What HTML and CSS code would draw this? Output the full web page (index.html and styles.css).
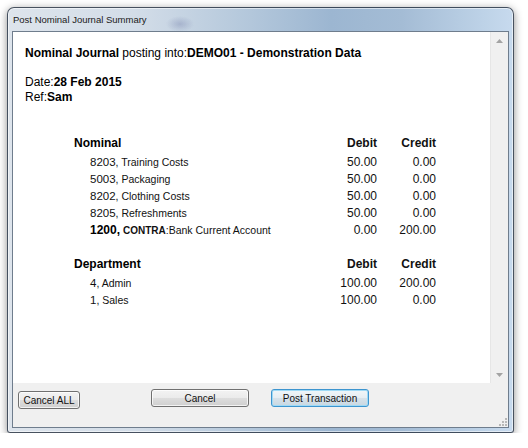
FILE: index.html
```html
<!DOCTYPE html>
<html>
<head>
<meta charset="utf-8">
<title>Post Nominal Journal Summary</title>
<link rel="stylesheet" href="styles.css">
</head>
<body>
<div class="window">
  <div class="titlebar"><span class="title">Post Nominal Journal Summary</span></div>
  <div class="client">
    <div class="panel">
      <div class="content">
        <p class="headline"><b>Nominal Journal</b> posting into:<b>DEMO01 - Demonstration Data</b></p>
        <p class="meta">Date:<b>28 Feb 2015</b><br>Ref:<b>Sam</b></p>

        <div class="ledger">
          <div class="lh">Nominal</div><div class="lh num">Debit</div><div class="lh num">Credit</div>
          <div class="acct"><span class="code">8203</span>, Training Costs</div><div class="num">50.00</div><div class="num">0.00</div>
          <div class="acct"><span class="code">5003</span>, Packaging</div><div class="num">50.00</div><div class="num">0.00</div>
          <div class="acct"><span class="code">8202</span>, Clothing Costs</div><div class="num">50.00</div><div class="num">0.00</div>
          <div class="acct"><span class="code">8205</span>, Refreshments</div><div class="num">50.00</div><div class="num">0.00</div>
          <div class="acct"><span class="code strong">1200,</span> <b class="contra">CONTRA</b>:Bank Current Account</div><div class="num">0.00</div><div class="num">200.00</div>
        </div>

        <div class="ledger dept">
          <div class="lh">Department</div><div class="lh num">Debit</div><div class="lh num">Credit</div>
          <div class="acct"><span class="code">4</span>, Admin</div><div class="num">100.00</div><div class="num">200.00</div>
          <div class="acct"><span class="code">1</span>, Sales</div><div class="num">100.00</div><div class="num">0.00</div>
        </div>
      </div>
      <div class="scrollbar">
        <div class="sb-btn"><svg width="7" height="4" viewBox="0 0 7 4"><path d="M0 4 L3.5 0 L7 4 Z" fill="#a3a3a3"/></svg></div>
        <div class="sb-track"></div>
        <div class="sb-btn"><svg width="7" height="4" viewBox="0 0 7 4"><path d="M0 0 L3.5 4 L7 0 Z" fill="#a3a3a3"/></svg></div>
      </div>
    </div>
    <div class="buttons">
      <button class="btn btn-small">Cancel ALL</button>
      <button class="btn btn-wide">Cancel</button>
      <button class="btn btn-wide btn-default">Post Transaction</button>
      <svg class="grip" width="9" height="9" viewBox="0 0 9 9">
        <g fill="#b8b8b8">
          <rect x="7" y="1" width="2" height="2"/>
          <rect x="4" y="4" width="2" height="2"/><rect x="7" y="4" width="2" height="2"/>
          <rect x="1" y="7" width="2" height="2"/><rect x="4" y="7" width="2" height="2"/><rect x="7" y="7" width="2" height="2"/>
        </g>
      </svg>
    </div>
  </div>
</div>
</body>
</html>
```

FILE: styles.css
```css
html, body {
  margin: 0;
  padding: 0;
  background: #ffffff;
}

body {
  font-family: "Liberation Sans", Arial, sans-serif;
  color: #000;
}

/* Aero-style dialog frame */
.window {
  box-sizing: border-box;
  margin: 7px 0 0 7px;
  width: 507px;
  height: 426px;
  border: 1px solid rgba(35, 45, 60, 0.8);
  border-radius: 7px 7px 3px 3px;
  background:
    radial-gradient(ellipse 14px 8px at 172px 16px, rgba(110, 120, 165, 0.35), rgba(110, 120, 165, 0) 100%),
    linear-gradient(90deg, #dde4ec 0%, #d3dde8 25%, #b3c7db 48%, #9cb6d1 64%, #a4bcd5 78%, #bdd2e7 94%, #c7daee 100%);
  box-shadow: 0 2px 9px rgba(0, 0, 0, 0.45), inset 0 0 0 1px rgba(255, 255, 255, 0.55);
  display: flex;
  flex-direction: column;
  padding: 0 4px 4px 4px;
}

.titlebar {
  height: 23px;
  display: flex;
  align-items: center;
  padding-left: 1px;
}

.title {
  font-size: 9.5px;
  color: #1a1a1a;
}

.client {
  flex: 1;
  display: flex;
  flex-direction: column;
  border: 1px solid #6f7d8d;
  background: #f0f0f0;
  min-height: 0;
}

/* White summary pane with its vertical scrollbar */
.panel {
  flex: 1;
  display: flex;
  background: #fff;
  min-height: 0;
}

.content {
  flex: 1;
  padding: 14px 0 0 12px;
}

.headline {
  margin: 0;
  font-size: 12px;
  line-height: 15px;
}

.meta {
  margin: 14px 0 0 0;
  font-size: 12px;
  line-height: 15px;
}

.ledger {
  display: grid;
  grid-template-columns: 243px 60px 59px;
  grid-template-rows: 19px;
  grid-auto-rows: 17px;
  align-items: center;
  margin: 29px 0 0 49px;
  font-size: 12px;
}

.ledger.dept {
  margin-top: 17px;
}

.lh {
  align-self: start;
  font-weight: bold;
  height: 19px;
  line-height: 19px;
}

.num {
  text-align: right;
  color: #111;
}

.acct {
  padding-left: 16px;
  font-size: 10.5px;
  color: #111;
  white-space: nowrap;
}

.code {
  font-size: 11.5px;
}

.code.strong {
  font-size: 12px;
  font-weight: bold;
  color: #000;
}

.contra {
  font-size: 10px;
}

.scrollbar {
  width: 17px;
  display: flex;
  flex-direction: column;
  background: #f0f0f0;
  border-left: 1px solid #e6e6e6;
}

.sb-btn {
  height: 17px;
  display: flex;
  align-items: center;
  justify-content: center;
}

.sb-track {
  flex: 1;
}

/* Bottom button strip */
.buttons {
  position: relative;
  height: 44px;
  box-sizing: border-box;
  display: flex;
  align-items: flex-start;
  padding: 6px 0 0 5px;
}

.btn {
  box-sizing: border-box;
  height: 18px;
  padding: 0;
  font-family: "Liberation Sans", Arial, sans-serif;
  font-size: 10px;
  color: #111;
  border: 1px solid #707070;
  border-radius: 3px;
  background: linear-gradient(#f3f3f3 0%, #ebebeb 48%, #dddddd 52%, #cfcfcf 100%);
  box-shadow: inset 0 0 0 1px rgba(255, 255, 255, 0.75);
}

.btn-small {
  width: 62px;
  margin-top: 2px;
  margin-right: 71px;
}

.btn-wide {
  width: 98px;
  margin-right: 22px;
}

.btn-default {
  border-color: #3d95cf;
  box-shadow: inset 0 0 0 1px #9fdaf6;
  background: linear-gradient(#f0f6f9 0%, #e6eef3 48%, #d6e2ea 52%, #c9d7e1 100%);
}

.grip {
  position: absolute;
  right: 1px;
  bottom: 1px;
}
```
